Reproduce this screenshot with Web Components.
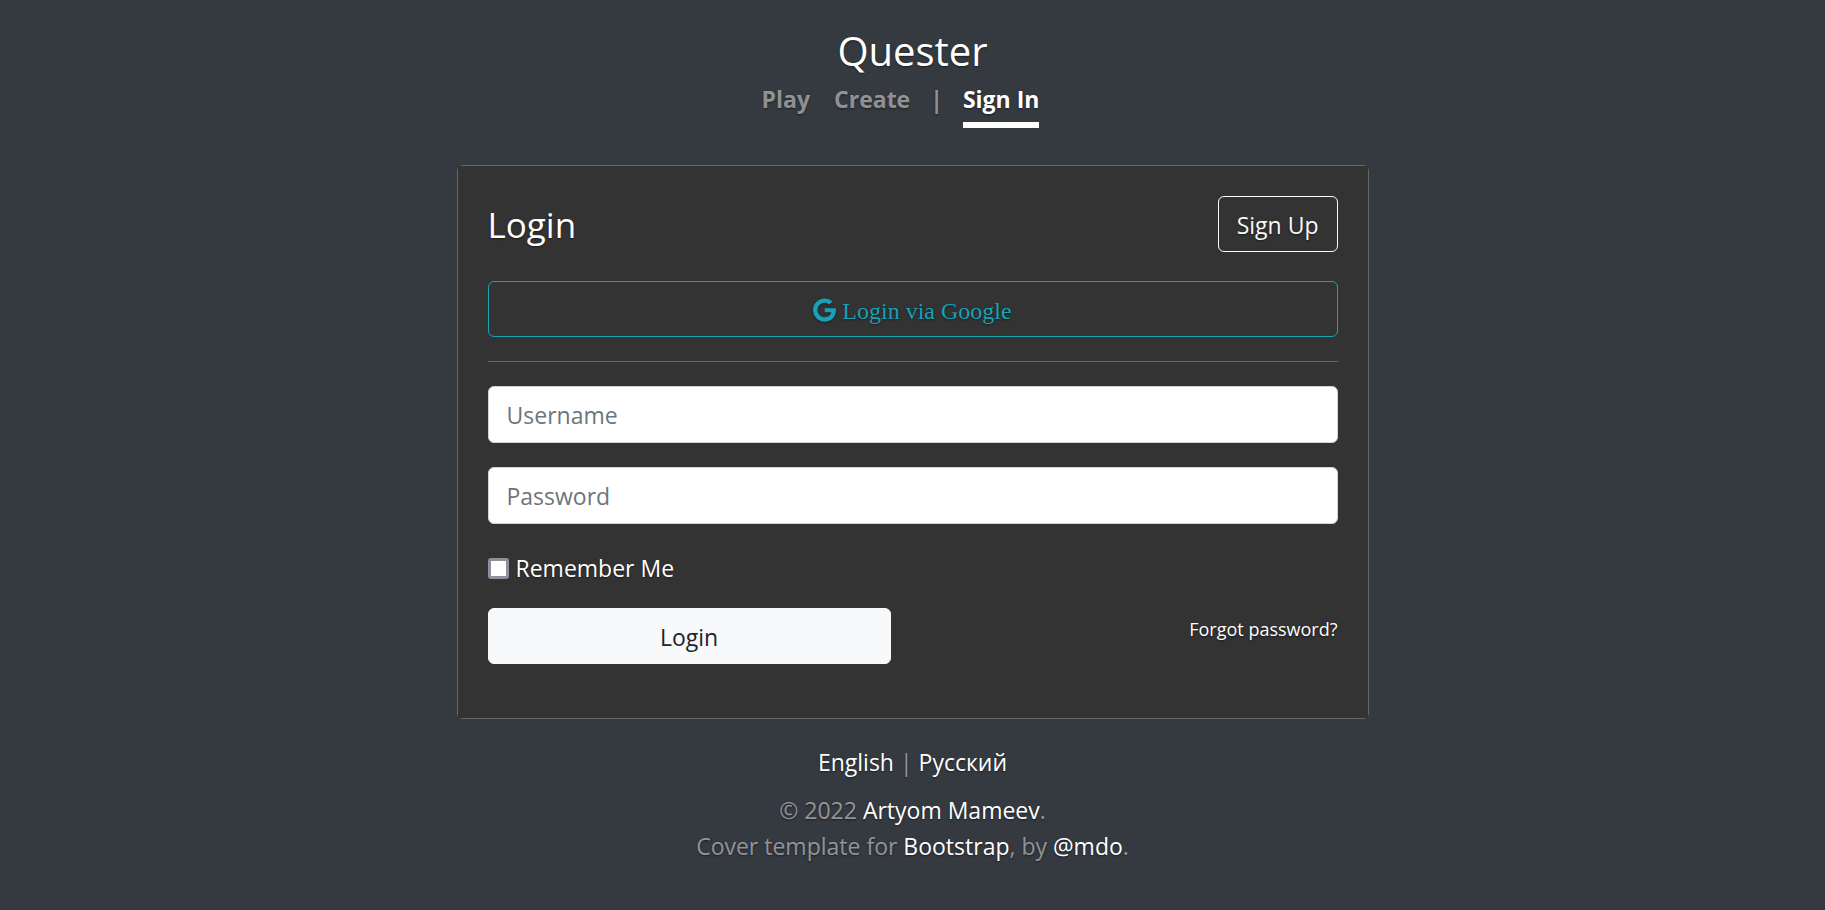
<!DOCTYPE html>
<html lang="en">
<head>
<meta charset="utf-8">
<meta name="viewport" content="width=device-width, initial-scale=1">
<title>Quester</title>
<style>
  html, body { margin: 0; min-height: 100vh; }
  body {
    background: #353a41;
    color: #fff;
    font: 23px/36px "Open Sans", "Noto Sans", sans-serif;
    text-shadow: 0 1px 2px rgba(0, 0, 0, .5);
  }
</style>
</head>
<body>
<quester-app></quester-app>

<script>
  const define = (name, html, setup) => {
    const template = document.createElement('template');
    template.innerHTML = `<style>*{box-sizing:border-box}:host{box-sizing:border-box}</style>${html.trim()}`;
    customElements.define(name, class extends HTMLElement {
      constructor() {
        super();
        this.attachShadow({ mode: 'open' }).append(template.content.cloneNode(true));
      }
      connectedCallback() { if (setup) setup(this, this.shadowRoot); }
    });
  };

  define('quester-link', `
    <style>
      :host { display: inline; }
      a { color: #fff; text-decoration: none; }
      a:hover { text-decoration: underline; }
    </style><a href="#"><slot></slot></a>
  `, (host, root) => { root.querySelector('a').href = host.getAttribute('href') || '#'; });

  define('nav-item', `
    <style>
      :host { display: block; font-weight: 700; }
      a {
        display: block;
        padding: 7px 0 5px;
        color: rgba(255, 255, 255, .5);
        text-decoration: none;
        border-bottom: 6px solid transparent;
      }
      :host([active]) a { color: #fff; border-bottom-color: #fff; }
    </style>
    <a href="#"><slot></slot></a>
  `);

  define('site-header', `
    <style>
      :host { display: block; text-align: center; }
      h1 { margin: 0; padding-top: 4px; font-size: 40px; line-height: 46px; font-weight: 400; }
      nav { display: flex; justify-content: center; gap: 24px; margin-right: 24px; }
      span { margin: 0 -4px; padding: 7px 0 5px; font-weight: 700; color: rgba(255, 255, 255, .5); }
    </style>
    <h1>Quester</h1>
    <nav>
      <nav-item>Play</nav-item>
      <nav-item>Create</nav-item>
      <span>|</span>
      <nav-item active>Sign In</nav-item>
    </nav>
  `);

  define('action-button', `
    <style>
      :host { display: block; }
      button {
        display: flex;
        align-items: center;
        justify-content: center;
        gap: 6px;
        width: 100%;
        padding: 10px 18px 8px;
        border: 1px solid #f8f9fa;
        border-radius: 6px;
        background: transparent;
        color: #f8f9fa;
        font: inherit;
        text-shadow: inherit;
        cursor: pointer;
      }
      :host([kind="info"]) button {
        padding: 11px 18px 7px;
        border-color: #17a2b8;
        color: #17a2b8;
        font-family: "Liberation Serif", serif;
        font-size: 24px;
      }
      :host([kind="light"]) button { background: #f8f9fa; color: #212529; text-shadow: none; }
    </style>
    <button type="button"><slot name="icon"></slot><slot></slot></button>
  `);

  define('google-icon', `
    <style>
      :host { display: block; padding-bottom: 2px; }
      svg { display: block; width: 23px; height: 24px; fill: currentColor; filter: drop-shadow(0 1px 1px rgba(0, 0, 0, .4)); }
    </style>
    <svg viewBox="0 0 488 512" aria-hidden="true"><path d="M488 261.8C488 403.3 391.1 504 248 504 110.8 504 0 393.2 0 256S110.8 8 248 8c66.8 0 123 24.5 166.3 64.9l-67.5 64.9C258.5 52.6 94.3 116.6 94.3 256c0 86.5 69.1 156.6 153.7 156.6 98.2 0 135-70.4 140.8-106.9H248v-85.3h236.1c2.3 12.7 3.9 24.9 3.9 41.4z"/></svg>
  `);

  define('text-field', `
    <style>
      :host { display: block; }
      input {
        display: block;
        width: 100%;
        height: 57px;
        padding: 9px 18px;
        border: 1px solid #ced4da;
        border-radius: 6px;
        background: #fff;
        color: #495057;
        font: inherit;
      }
      input::placeholder { color: #6c757d; opacity: 1; }
    </style>
    <input>
  `, (host, root) => {
    const input = root.querySelector('input');
    const label = host.getAttribute('label');
    input.type = host.getAttribute('type') || 'text';
    input.placeholder = label;
    input.setAttribute('aria-label', label);
  });

  define('check-field', `
    <style>
      :host { display: block; }
      label { display: flex; width: fit-content; align-items: center; gap: 7px; }
      input {
        appearance: none;
        width: 21px;
        height: 21px;
        margin: 0;
        border: 3px solid #8f8f9d;
        border-radius: 3px;
        background: #fff;
      }
      input:checked { background: #0060df; }
    </style>
    <label for="box"><input id="box" type="checkbox"><slot></slot></label>
  `);

  define('login-card', `
    <style>
      :host { display: block; border: 1px solid #666; border-radius: 6px; }
      .body { padding: 30px 30px 54px; background: #333; }
      header { display: flex; justify-content: space-between; align-items: center; }
      h2 { margin: 0; padding-top: 2px; font-size: 35px; line-height: 44px; font-weight: 400; }
      .google { margin-top: 29px; }
      hr { margin: 24px 0; border: 0; border-top: 1px solid #666; }
      text-field { margin-bottom: 24px; }
      check-field { margin: 26px 0 22px; }
      .actions { display: grid; grid-template-columns: 403px 1fr; align-items: start; }
      @media (max-width: 900px) { .actions { grid-template-columns: 1fr 1fr; } }
      .forgot { text-align: right; padding-top: 3px; font-size: 18px; line-height: 36px; }
    </style>
    <div class="body">
      <header>
        <h2>Login</h2>
        <action-button>Sign Up</action-button>
      </header>
      <action-button class="google" kind="info"><google-icon slot="icon"></google-icon>Login via Google</action-button>
      <hr>
      <text-field label="Username"></text-field>
      <text-field label="Password" type="password"></text-field>
      <check-field>Remember Me</check-field>
      <div class="actions">
        <action-button kind="light">Login</action-button>
        <div class="forgot"><quester-link>Forgot password?</quester-link></div>
      </div>
    </div>
  `);

  define('site-footer', `
    <style>
      :host { display: block; text-align: center; color: rgba(255, 255, 255, .5); }
      p { margin: 0 0 12px; }
    </style>
    <p><quester-link>English</quester-link> | <quester-link>Русский</quester-link></p>
    <p>© 2022 <quester-link>Artyom Mameev</quester-link>.<br>
    Cover template for <quester-link>Bootstrap</quester-link>, by <quester-link>@mdo</quester-link>.</p>
  `);

  define('quester-app', `
    <style>
      :host { display: block; min-height: 100vh; padding: 24px; }
      .cover { display: flex; flex-direction: column; max-width: 912px; margin: 0 auto; }
      login-card { margin: 37px 0 25px; }
    </style>
    <div class="cover">
      <site-header></site-header>
      <main><login-card></login-card></main>
      <site-footer></site-footer>
    </div>
  `);
</script>
</body>
</html>
